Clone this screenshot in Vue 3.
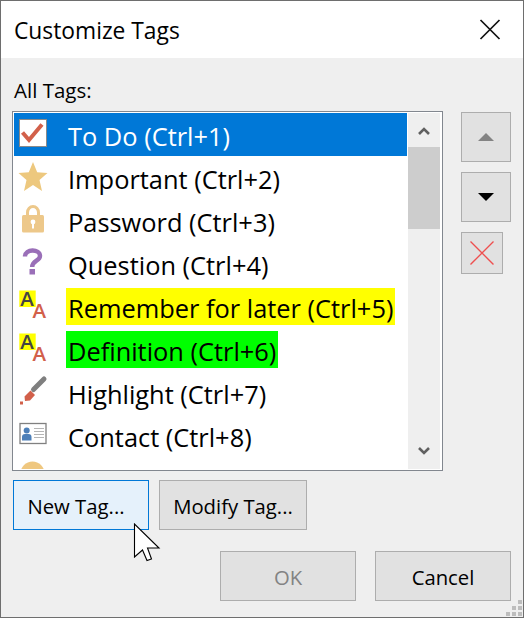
<script setup>
const tags = [
  { id: "todo", label: "To Do (Ctrl+1)", selected: true },
  { id: "star", label: "Important (Ctrl+2)" },
  { id: "lock", label: "Password (Ctrl+3)" },
  { id: "question", label: "Question (Ctrl+4)" },
  { id: "aa", label: "Remember for later (Ctrl+5)", mark: "yellow" },
  { id: "aa", label: "Definition (Ctrl+6)", mark: "green" },
  { id: "pen", label: "Highlight (Ctrl+7)" },
  { id: "contact", label: "Contact (Ctrl+8)" },
  // next row is scrolled almost out of view, only its icon shows
  { id: "circle", label: "" },
];
</script>

<template>
  <div class="dialog">
    <div class="title-bar">
      <span class="title">Customize Tags</span>
      <svg class="close" width="22" height="22" viewBox="0 0 22 22">
        <path d="M1.5 1 20.5 20M20.5 1 1.5 20" stroke="#111" stroke-width="1.7" fill="none" />
      </svg>
    </div>

    <div class="body">
      <div class="label">All Tags:</div>

      <div class="list-row">
        <div class="list">
          <div class="rows">
            <div v-for="(tag, i) in tags" :key="i" class="row" :class="{ selected: tag.selected }">
              <svg class="tag-icon" width="32" height="32" viewBox="0 0 32 32">
                <template v-if="tag.id === 'todo'">
                  <rect x="1.5" y="0.5" width="27" height="27" fill="#fff" stroke="#8a8a8a" />
                  <path d="M4.500 13.500 11 21 24 5.500" fill="none" stroke="#d2604a" stroke-width="4" />
                </template>
                <path v-else-if="tag.id === 'star'" d="M15 0 19.200 10.200 29.500 11 21.500 18 24 29 15 23 6 29 8.500 18 0.500 11 10.800 10.200Z" fill="#edc87e" />
                <template v-else-if="tag.id === 'lock'">
                  <path d="M9.500 11V7.500a5.500 6 0 0 1 11 0V11" fill="none" stroke="#edc88a" stroke-width="3" />
                  <rect x="4" y="10" width="22" height="17.500" rx="1.500" fill="#edc88a" />
                  <circle cx="15" cy="17" r="2.400" fill="#fff" />
                  <rect x="14" y="17" width="2" height="6.500" fill="#fff" />
                </template>
                <template v-else-if="tag.id === 'question'">
                  <path d="M7 8.500C7 0.500 22 0.500 22 8 22 13 14.200 12.500 14.200 19" fill="none" stroke="#9a6fb8" stroke-width="4.400" />
                  <rect x="11.500" y="21" width="5.500" height="5.500" fill="#9a6fb8" />
                </template>
                <template v-else-if="tag.id === 'aa'">
                  <rect x="1.300" y="-0.500" width="16.400" height="16.500" fill="#ffff00" />
                  <text x="2.300" y="15" class="aa dark">A</text>
                  <text x="14.500" y="27" class="aa red">A</text>
                </template>
                <template v-else-if="tag.id === 'pen'">
                  <path d="M26 2 15.500 12.500" stroke="#7f7f7f" stroke-width="5" fill="none" stroke-linecap="round" />
                  <path d="M12.500 13.500 17 18 12 23.500 7 24 6.500 19.500Z" fill="#d2604a" />
                  <rect x="2" y="24.500" width="3" height="3" fill="#d2604a" />
                </template>
                <template v-else-if="tag.id === 'contact'">
                  <rect x="2" y="3.500" width="26" height="20" fill="#fff" stroke="#808080" stroke-width="1.300" />
                  <circle cx="8.700" cy="10.500" r="3" fill="#4d7fb8" />
                  <path d="M4 20.500V17q0-3 3-3h3.500q3 0 3 3V20.500Z" fill="#4d7fb8" />
                  <path d="M16 8.500H26M16 11.500H26M16 14.500H26M16 17.500H26" stroke="#b5b5b5" />
                </template>
                <circle v-else cx="14.500" cy="10.500" r="12" fill="#efc77f" />
              </svg>
              <span v-if="tag.label" class="tag-text" :class="tag.mark">{{ tag.label }}</span>
            </div>
          </div>
          <div class="scrollbar">
            <svg width="32" height="34" viewBox="0 0 32 34">
              <path d="M11 21 16 16 21 21" fill="none" stroke="#606060" stroke-width="2.600" />
            </svg>
            <div class="thumb"></div>
            <svg class="scroll-down" width="32" height="34" viewBox="0 0 32 34">
              <path d="M11 13 16 18 21 13" fill="none" stroke="#606060" stroke-width="2.600" />
            </svg>
          </div>
        </div>

        <div class="side">
          <button class="btn square">
            <svg width="16" height="9" viewBox="0 0 16 9"><path d="M8 0 16 8H0Z" fill="#838383" /></svg>
          </button>
          <button class="btn square">
            <svg width="16" height="9" viewBox="0 0 16 9"><path d="M0 0H16L8 8Z" fill="#000" /></svg>
          </button>
          <button class="btn small-square">
            <svg width="26" height="26" viewBox="0 0 26 26">
              <path d="M1.500 1.500 24.500 24.500M24.500 1.500 1.500 24.500" stroke="#ee4f4f" stroke-width="1.400" fill="none" />
            </svg>
          </button>
        </div>
      </div>

      <div class="tag-buttons">
        <button class="btn new-tag">New Tag...</button>
        <button class="btn modify-tag">Modify Tag...</button>
      </div>

      <div class="footer">
        <button class="btn action disabled">OK</button>
        <button class="btn action">Cancel</button>
      </div>
    </div>

    <div class="grip">
      <i v-for="n in 6" :key="n" :class="'g' + n"></i>
    </div>

    <svg class="cursor" width="28" height="40" viewBox="0 0 28 40">
      <path d="M1.500 1V34L9.500 27 14 37.500 18.500 36 14.500 25H26Z" fill="#fff" stroke="#000" stroke-width="1.100" />
    </svg>
  </div>
</template>

<style>
html,
body {
  margin: 0;
  background: #efefef;
}
</style>

<style scoped>
.dialog {
  position: relative;
  box-sizing: border-box;
  width: 524px;
  height: 618px;
  border: 1px solid #6e6e6e;
  background: #efefef;
  overflow: hidden;
  color: #000;
  font-family: "Open Sans", "Noto Sans", sans-serif;
}

.title-bar {
  height: 57px;
  background: #fff;
  display: flex;
  align-items: center;
  justify-content: space-between;
  padding: 0 22px 0 13px;
}

.title {
  font-size: 22.8px;
  line-height: 32px;
  padding-top: 2px;
}

.close {
  display: block;
}

.body {
  padding: 0 11px;
}

.label {
  height: 53px;
  box-sizing: border-box;
  padding-top: 19px;
  padding-left: 2px;
  font-size: 20.5px;
  line-height: 27px;
}

.list-row {
  display: flex;
  gap: 18px;
}

.list {
  box-sizing: border-box;
  width: 431px;
  height: 360px;
  border: 1px solid #82878f;
  padding: 1px 2px 1px 1px;
  background: #fff;
  display: flex;
  gap: 1px;
}

.rows {
  flex: 1;
  min-width: 0;
  overflow: hidden;
}

.row {
  height: 43px;
  display: flex;
  align-items: center;
  padding-left: 4px;
  font-size: 25.4px;
  white-space: nowrap;
}

.row.selected {
  background: #0078d7;
  color: #fff;
}

.tag-icon {
  flex: none;
  margin-right: 16px;
  overflow: visible;
}

.aa {
  font-size: 20.5px;
  font-weight: 600;
}

.aa.dark {
  fill: #444;
}

.aa.red {
  fill: #d2604a;
}

.tag-text {
  padding: 0 2px;
  line-height: 40px;
  height: 37px;
}

.tag-text.yellow {
  background: #ffff00;
}

.tag-text.green {
  background: #00ff00;
}

.scrollbar {
  flex: none;
  width: 32px;
  background: #efefef;
  display: flex;
  flex-direction: column;
}

.scrollbar svg {
  display: block;
  flex: none;
}

.thumb {
  height: 82px;
  background: #cdcdcd;
}

.scroll-down {
  margin-top: auto;
}

.side {
  display: flex;
  flex-direction: column;
  gap: 10px;
  padding-top: 1px;
}

.btn {
  box-sizing: border-box;
  display: flex;
  align-items: center;
  justify-content: center;
  margin: 0;
  padding: 0;
  border: 1px solid #adadad;
  background: #e1e1e1;
  color: #000;
  font-family: inherit;
  font-size: 20.3px;
}

.square {
  width: 50px;
  height: 50px;
}

.small-square {
  width: 42px;
  height: 42px;
}

.tag-buttons {
  display: flex;
  gap: 10px;
  margin-top: 9px;
  padding-left: 1px;
}

.new-tag {
  width: 136px;
  height: 50px;
  padding: 2px 10px 0 0;
  background: #e5f1fb;
  border-color: #0078d7;
}

.modify-tag {
  width: 148px;
  height: 50px;
  padding-top: 2px;
}

.footer {
  display: flex;
  justify-content: flex-end;
  gap: 19px;
  margin-top: 21px;
  padding-right: 1px;
}

.action {
  width: 136px;
  height: 50px;
  padding-top: 2px;
}

.disabled {
  color: #838383;
}

.grip {
  position: absolute;
  right: 1px;
  bottom: 1px;
  width: 16px;
  height: 16px;
}

.grip i {
  position: absolute;
  width: 4px;
  height: 4px;
  background: #bdbdbd;
}

.g1 { left: 12px; top: 0; }
.g2 { left: 6px; top: 6px; }
.g3 { left: 12px; top: 6px; }
.g4 { left: 0; top: 12px; }
.g5 { left: 6px; top: 12px; }
.g6 { left: 12px; top: 12px; }

.cursor {
  position: absolute;
  left: 132px;
  top: 522px;
}
</style>
